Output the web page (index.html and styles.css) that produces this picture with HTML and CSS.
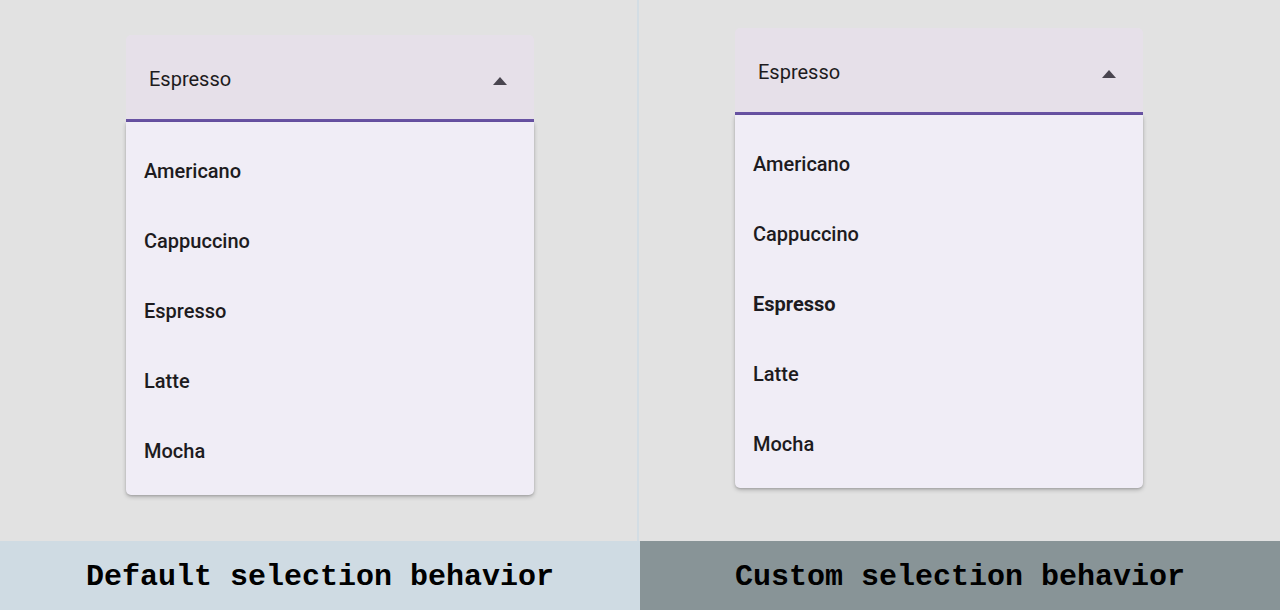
FILE: index.html
```html
<!DOCTYPE html>
<html>
<head>
<meta charset="utf-8">
<link rel="stylesheet" href="styles.css">
</head>
<body>
<div class="page">
  <div class="panels">
    <div class="panel panel-left">
      <div class="dropdown">
        <div class="field">
          <span class="field-text">Espresso</span>
          <span class="arrow"></span>
        </div>
        <div class="menu">
          <div class="item">Americano</div>
          <div class="item">Cappuccino</div>
          <div class="item">Espresso</div>
          <div class="item">Latte</div>
          <div class="item">Mocha</div>
        </div>
      </div>
    </div>
    <div class="panel panel-right">
      <div class="dropdown">
        <div class="field">
          <span class="field-text">Espresso</span>
          <span class="arrow"></span>
        </div>
        <div class="menu">
          <div class="item">Americano</div>
          <div class="item">Cappuccino</div>
          <div class="item item-selected">Espresso</div>
          <div class="item">Latte</div>
          <div class="item">Mocha</div>
        </div>
      </div>
    </div>
  </div>
  <div class="labels">
    <div class="label label-left">Default selection behavior</div>
    <div class="label label-right">Custom selection behavior</div>
  </div>
</div>
</body>
</html>
```
FILE: styles.css
```css
* { box-sizing: border-box; }
html, body { margin: 0; padding: 0; }
body {
  width: 1280px;
  height: 610px;
  overflow: hidden;
  background: #e2e2e2;
  font-family: Roboto, "Liberation Sans", sans-serif;
}
.page {
  display: flex;
  flex-direction: column;
  width: 1280px;
  height: 610px;
}
.panels {
  display: flex;
  height: 541px;
}
.panel {
  width: 640px;
  height: 541px;
  background: #e2e2e2;
}
.panel-left {
  padding: 35px 0 0 126px;
  border-right: 2px solid #d3dde4;
  width: 639px;
}
.panel-right {
  padding: 28px 0 0 96px;
  width: 641px;
}
.dropdown {
  width: 408px;
}
.field {
  height: 87px;
  background: #e6e0e9;
  border-bottom: 3px solid #6852a3;
  border-radius: 5px 5px 0 0;
  display: flex;
  align-items: center;
  justify-content: space-between;
  padding: 4px 27px 0 23px;
}
.field-text {
  font-size: 20px;
  color: #1d1b20;
  line-height: 24px;
}
.arrow {
  width: 0;
  height: 0;
  border-left: 7px solid transparent;
  border-right: 7px solid transparent;
  border-bottom: 8px solid #49454f;
  margin-top: 4px;
}
.menu {
  background: #f0edf6;
  border-radius: 0 0 5px 5px;
  box-shadow: 0 2px 4px rgba(0,0,0,0.22), 0 1px 2px rgba(0,0,0,0.12);
  padding: 14px 0 9px 0;
}
.item {
  height: 70px;
  display: flex;
  align-items: center;
  padding-left: 18px;
  font-size: 20px;
  font-weight: 500;
  color: #1d1b20;
}
.item-selected {
  font-weight: 700;
}
.labels {
  display: flex;
  height: 69px;
}
.label {
  width: 640px;
  display: flex;
  align-items: center;
  justify-content: center;
  padding-top: 3px;
  font-family: "Liberation Mono", "DejaVu Sans Mono", monospace;
  font-weight: 700;
  font-size: 30px;
  color: #000;
}
.label-left { background: #cfdbe3; }
.label-right { background: #889497; }
```
